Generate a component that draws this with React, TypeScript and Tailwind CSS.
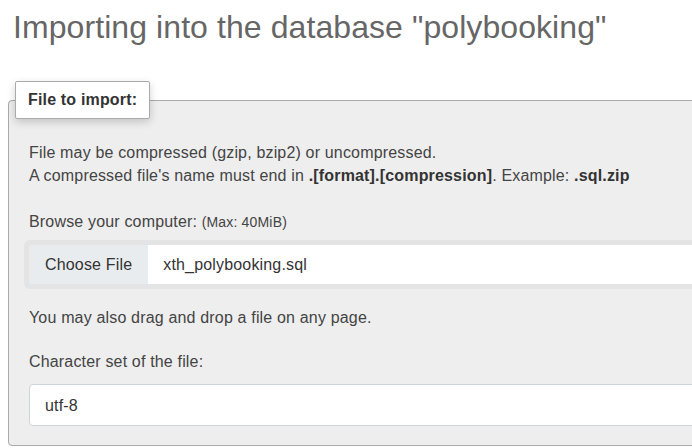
import React from 'react';

export default function App() {
  return (
    <div className="w-[692px] h-[448px] overflow-hidden bg-white font-['Liberation_Sans',Arial,sans-serif] text-[#444]">
      <div className="pl-2">
        <h1 className="mt-2 ml-[5px] text-[32px] leading-[38px] font-normal tracking-[0.08px] text-[#666] whitespace-nowrap">
          Importing into the database "polybooking"
        </h1>

        {/* Import form */}
        <fieldset className="mt-[35px] w-[900px] rounded-[4px] border border-[#aaa] bg-[#eee] p-0">
          <legend className="ml-[6px] rounded-[2px] border border-[#aaa] bg-white px-3 py-[9px] text-[16px] font-bold leading-[18px] tracking-[0.17px] text-[#333] shadow-[0_3px_8px_rgba(0,0,0,0.18)]">
            File to import:
          </legend>

          <div className="px-5 pt-[22px] pb-[19px] text-[16px] leading-[23px] tracking-[0.17px]">
            <p>
              File may be compressed (gzip, bzip2) or uncompressed.
              <br />
              A compressed file's name must end in <b className="text-[#333]">.[format].[compression]</b>. Example: <b className="text-[#333]">.sql.zip</b>
            </p>

            <p className="mt-[23px]">
              Browse your computer: <span className="text-[14px]">(Max: 40MiB)</span>
            </p>

            <div className="mt-[6px] -ml-[5px] w-[700px] rounded-[6px] bg-[#e4e4e4] p-[5px]">
              <div className="flex h-[39px] overflow-hidden rounded-[3px]">
                <div className="flex items-center bg-[#e9ecef] px-[16px] text-[#333]">Choose File</div>
                <div className="flex flex-1 items-center bg-white pl-[15px] text-[#333]">xth_polybooking.sql</div>
              </div>
            </div>

            <p className="mt-[17px]">You may also drag and drop a file on any page.</p>

            <p className="mt-[21px]">Character set of the file:</p>

            <div className="mt-[11px] flex h-[42px] w-[700px] items-center rounded-[4px] border border-[#ced4da] bg-white pl-[15px] text-[#333]">
              utf-8
            </div>
          </div>
        </fieldset>
      </div>
    </div>
  );
}
